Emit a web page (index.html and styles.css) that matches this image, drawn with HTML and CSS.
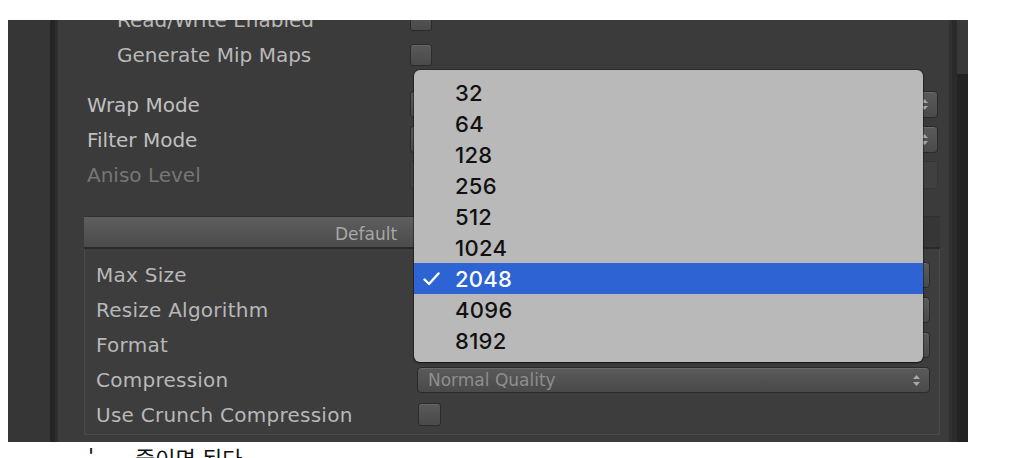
FILE: index.html
```html
<!DOCTYPE html>
<html lang="ko">
<head>
<meta charset="utf-8">
<link rel="stylesheet" href="styles.css">
</head>
<body>
<div class="window">
  <div class="side"></div>
  <div class="divider"></div>
  <div class="inspector">
    <div class="content">
      <div class="row indent"><span class="label">Read/Write Enabled</span><span class="check"></span></div>
      <div class="row indent"><span class="label">Generate Mip Maps</span><span class="check"></span></div>
      <div class="row spaced"><span class="label">Wrap Mode</span><span class="dropdown"><svg class="arrows" width="7" height="11" viewBox="0 0 7 11"><path d="M3.5 0 L7 4 L0 4 Z M0 7 L7 7 L3.5 11 Z"/></svg></span></div>
      <div class="row"><span class="label">Filter Mode</span><span class="dropdown"><svg class="arrows" width="7" height="11" viewBox="0 0 7 11"><path d="M3.5 0 L7 4 L0 4 Z M0 7 L7 7 L3.5 11 Z"/></svg></span></div>
      <div class="row"><span class="label dim">Aniso Level</span><span class="slider"></span></div>

      <div class="tabs">
        <div class="tab tab-default">Default</div>
        <div class="tab tab-other"></div>
      </div>
      <div class="group">
        <div class="row"><span class="label">Max Size</span><span class="dropdown small"><svg class="arrows" width="7" height="11" viewBox="0 0 7 11"><path d="M3.5 0 L7 4 L0 4 Z M0 7 L7 7 L3.5 11 Z"/></svg></span></div>
        <div class="row"><span class="label">Resize Algorithm</span><span class="dropdown small"><svg class="arrows" width="7" height="11" viewBox="0 0 7 11"><path d="M3.5 0 L7 4 L0 4 Z M0 7 L7 7 L3.5 11 Z"/></svg></span></div>
        <div class="row"><span class="label">Format</span><span class="dropdown small"><svg class="arrows" width="7" height="11" viewBox="0 0 7 11"><path d="M3.5 0 L7 4 L0 4 Z M0 7 L7 7 L3.5 11 Z"/></svg></span></div>
        <div class="row"><span class="label">Compression</span><span class="dropdown small"><span class="value">Normal Quality</span><svg class="arrows" width="7" height="11" viewBox="0 0 7 11"><path d="M3.5 0 L7 4 L0 4 Z M0 7 L7 7 L3.5 11 Z"/></svg></span></div>
        <div class="row"><span class="label">Use Crunch Compression</span><span class="check big"></span></div>
      </div>
    </div>
  </div>
  <div class="rdiv"></div>
  <div class="scroll"><div class="thumb"></div></div>

  <div class="popup">
    <div class="item">32</div>
    <div class="item">64</div>
    <div class="item">128</div>
    <div class="item">256</div>
    <div class="item">512</div>
    <div class="item">1024</div>
    <div class="item sel"><svg class="tick" width="17" height="14" viewBox="0 0 17 14"><path d="M1.5 7.5 L6 12 L15.5 1.5" fill="none" stroke="#fff" stroke-width="2.4" stroke-linecap="round" stroke-linejoin="round"/></svg>2048</div>
    <div class="item">4096</div>
    <div class="item">8192</div>
  </div>
</div>
<div class="note"><span class="en">'</span><span class="ko">줄이면 된다</span></div>
</body>
</html>
```

FILE: styles.css
```css
body {
  margin: 0;
  background: #ffffff;
  font-family: "DejaVu Sans", sans-serif;
}

.window {
  position: relative;
  margin: 20px 0 0 8px;
  width: 960px;
  height: 422px;
  display: flex;
  overflow: hidden;
  background: #3a3a3a;
}

.side {
  width: 42px;
  background: #363636;
}

.divider {
  width: 8px;
  background: linear-gradient(to right, #252525 0, #252525 5px, #2f2f2f 5px);
}

.inspector {
  flex: 1;
  background: #3b3b3b;
  overflow: hidden;
}

.rdiv {
  width: 8px;
  background: linear-gradient(to right, #313131 0, #313131 3px, #2a2a2a 3px);
}

.scroll {
  width: 11px;
  background: #232323;
}

.thumb {
  height: 54px;
  background: #393939;
}

.content {
  margin-top: -18px;
}

.row {
  display: flex;
  align-items: center;
  height: 35px;
  padding: 0 11px 0 29px;
}

.label {
  flex: 0 0 323px;
  box-sizing: border-box;
  font-size: 20px;
  color: #c0c0c0;
  white-space: nowrap;
}

.indent .label {
  padding-left: 30px;
  color: #b8b8b8;
}

.label.dim {
  color: #767676;
}

.spaced {
  margin-top: 15px;
}

.check {
  width: 22px;
  height: 22px;
  box-sizing: border-box;
  border-radius: 3px;
  border: 1px solid #2b2b2b;
  background: linear-gradient(#595959, #4a4a4a);
  box-shadow: inset 0 1px 0 rgba(255, 255, 255, 0.08);
}

.check.big {
  width: 23px;
  height: 23px;
  margin-left: 1px;
}

.dropdown {
  flex: 1;
  height: 27px;
  box-sizing: border-box;
  position: relative;
  display: flex;
  align-items: center;
  border-radius: 4px;
  border: 1px solid #2a2a2a;
  background: linear-gradient(#5a5a5a, #4a4a4a);
  box-shadow: inset 0 1px 0 rgba(255, 255, 255, 0.1);
}

.dropdown.small {
  height: 26px;
}

.dropdown .value {
  padding-left: 10px;
  font-size: 17px;
  color: #8e8e8e;
}

.arrows {
  position: absolute;
  right: 9px;
  top: 7px;
  fill: #a9a9a9;
}

.slider {
  flex: 1;
  height: 28px;
  box-sizing: border-box;
  border-radius: 2px;
  border: 1px solid #353535;
  background: #404040;
}

.tabs {
  display: flex;
  height: 33px;
  margin: 24px 9px 0 26px;
}

.tab {
  box-sizing: border-box;
  border-top: 1px solid #303030;
  border-bottom: 2px solid #2a2a2a;
}

.tab-default {
  flex: 1;
  display: flex;
  align-items: center;
  justify-content: center;
  padding-top: 3px;
  background: linear-gradient(#5e5e5e, #4b4b4b);
  font-size: 17px;
  color: #a7a7a7;
}

.tab-other {
  width: 292px;
  background: #363636;
}

.group {
  margin: 0 9px 0 26px;
  padding: 8px 9px 2px 11px;
  border: 1px solid #4a4a4a;
  border-top: none;
  background: #3d3d3d;
}

.group .row {
  padding: 0;
}

.group .label {
  flex-basis: 321px;
  letter-spacing: 0.25px;
  color: #b8b8b8;
}

.popup {
  position: absolute;
  left: 406px;
  top: 50px;
  width: 509px;
  height: 292px;
  box-sizing: border-box;
  padding: 7px 0 6px;
  border-radius: 6px;
  background: #b9b9b9;
  box-shadow: 0 1px 2px rgba(0, 0, 0, 0.6), 0 0 0 1px rgba(0, 0, 0, 0.25);
}

.item {
  position: relative;
  height: 31px;
  display: flex;
  align-items: center;
  padding-left: 41px;
  font-family: Inter, "Liberation Sans", sans-serif;
  font-size: 22px;
  font-weight: 500;
  letter-spacing: 0.3px;
  color: #111111;
}

.item.sel {
  background: #2d63d3;
  color: #ffffff;
}

.tick {
  position: absolute;
  left: 9px;
  top: 9px;
}

.note {
  display: flex;
  gap: 41px;
  margin-top: 4px;
  padding-left: 88px;
  font-size: 22px;
  line-height: 22px;
  color: #111111;
}

.note .en {
  font-family: "DejaVu Sans", sans-serif;
}

.note .ko {
  font-family: "Noto Sans CJK KR", sans-serif;
}
```
